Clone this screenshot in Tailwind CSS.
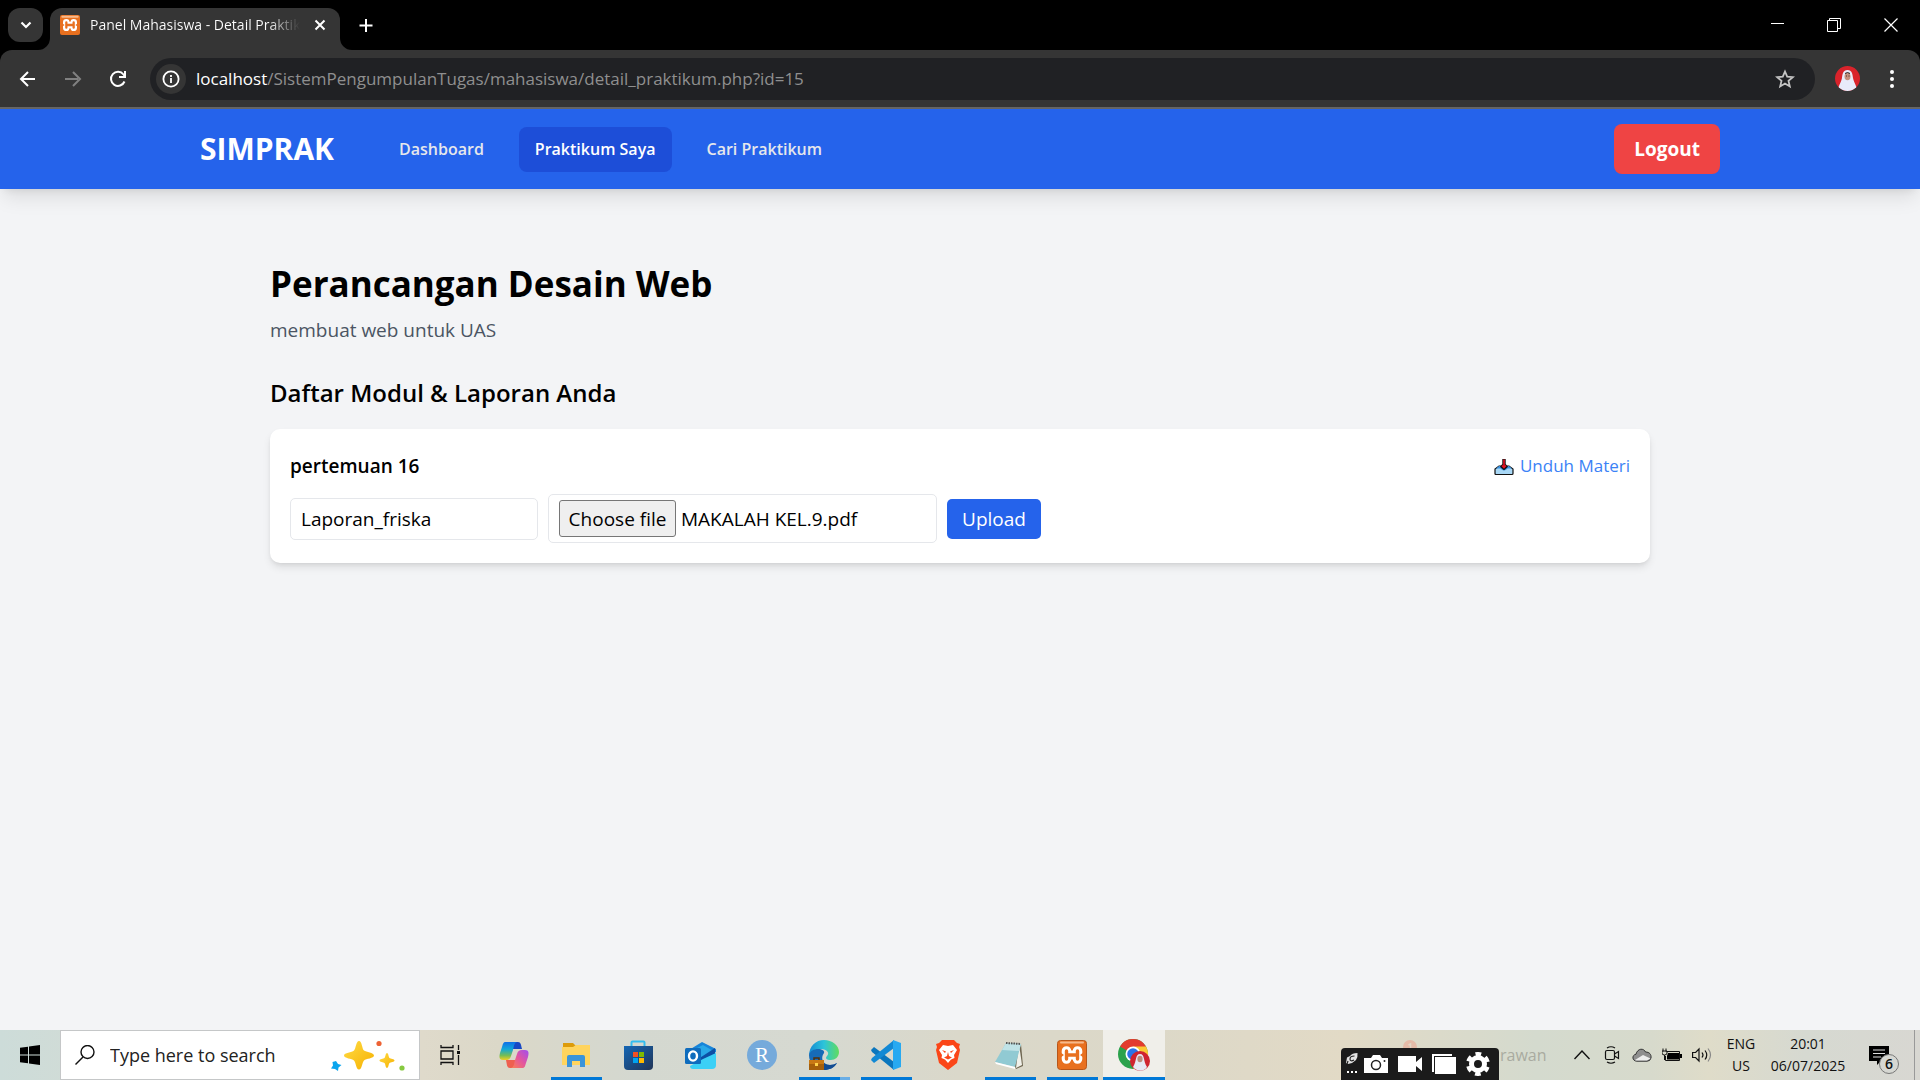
<!DOCTYPE html>
<html lang="id">
<head>
<meta charset="utf-8">
<meta name="viewport" content="width=device-width, initial-scale=1">
<title>Panel Mahasiswa - Detail Praktikum</title>
<script src="https://cdn.jsdelivr.net/npm/@tailwindcss/browser@4"></script>
</head>
<body class="flex min-h-screen flex-col bg-[#f3f4f6] font-['Open_Sans','Noto_Sans',sans-serif] text-black">

<!-- Tab strip -->
<div class="flex h-[50px] shrink-0 items-start bg-black text-white">
  <button aria-label="Search tabs" class="mt-2 ml-2 flex h-[34px] w-[35px] items-center justify-center rounded-xl bg-[#353535]">
    <svg class="size-4" viewBox="0 0 16 16" fill="none" stroke="currentColor" stroke-width="2.2"><path d="M3.500 5.500L8 10l4.500-4.500"/></svg>
  </button>
  <div class="relative mt-2 ml-[7px] flex h-[42px] w-[290px] items-center rounded-t-xl bg-[#353535] pb-2 pl-[10px]">
    <svg class="absolute -left-3 bottom-0 size-3" viewBox="0 0 12 12"><path d="M12 0v12H0A12 12 0 0 0 12 0z" fill="#353535"/></svg>
    <svg class="absolute -right-3 bottom-0 size-3" viewBox="0 0 12 12"><path d="M0 0v12h12A12 12 0 0 1 0 0z" fill="#353535"/></svg>
    <svg class="size-5 shrink-0" viewBox="0 0 30 30"><rect width="30" height="30" rx="3" fill="#e8701f"/><rect x="2" y="1" width="26" height="3" rx="1.500" fill="#f6b98c"/><path d="M9.500 11v8M20.500 11v8M9.500 15h11" fill="none" stroke="#fff" stroke-width="10" stroke-linecap="round"/><path d="M9.500 11v8M20.500 11v8M9.500 15h11" fill="none" stroke="#e8701f" stroke-width="3.400" stroke-linecap="round"/><path d="M3 12.500L7 15l-4 2.500zM27 12.500L23 15l4 2.500zM12.500 5h5L15 10zM12.500 25h5L15 20z" fill="#e8701f"/></svg>
    <span class="ml-[10px] w-[210px] overflow-hidden bg-linear-to-r from-white from-85% to-[#353535] bg-clip-text text-[14px] leading-5 whitespace-nowrap text-transparent">Panel Mahasiswa - Detail Praktikum</span>
    <button aria-label="Close tab" class="ml-3 shrink-0"><svg class="size-4" viewBox="0 0 16 16" stroke="currentColor" stroke-width="2"><path d="M3.500 3.500l9 9M12.500 3.500l-9 9"/></svg></button>
  </div>
  <button aria-label="New tab" class="mt-[17px] ml-[18px]"><svg class="size-4" viewBox="0 0 16 16" stroke="currentColor" stroke-width="2"><path d="M8 2v13M1.500 8.500h13"/></svg></button>
  <div class="ml-auto flex h-[50px]">
    <button aria-label="Minimize" class="flex w-14 items-center justify-center"><svg class="size-[14px]" viewBox="0 0 14 14" stroke="currentColor"><path d="M0 5.500h13"/></svg></button>
    <button aria-label="Restore" class="flex w-14 items-center justify-center"><svg class="size-[14px]" viewBox="0 0 14 14" fill="none" stroke="currentColor"><path d="M.5 2.500h10v11h-10zM2.500 2.500v-2h11v10h-3"/></svg></button>
    <button aria-label="Close" class="flex w-[58px] items-center justify-center"><svg class="size-[14px]" viewBox="0 0 14 14" stroke="currentColor" stroke-width="1.200"><path d="M.5.5l13 13M13.500.5l-13 13"/></svg></button>
  </div>
</div>

<!-- Address bar -->
<div class="bg-black">
<div class="flex h-[59px] shrink-0 items-center rounded-t-xl border-b-2 border-[#666] bg-[#353535] pl-[18px] text-white">
  <button aria-label="Back" class="mr-[25px]"><svg class="size-5" viewBox="0 0 20 20" fill="none" stroke="currentColor" stroke-width="2"><path d="M17 10H4M10 3l-7 7 7 7"/></svg></button>
  <button aria-label="Forward" class="mr-[25px] text-[#808080]"><svg class="size-5" viewBox="0 0 20 20" fill="none" stroke="currentColor" stroke-width="2"><path d="M2 10h13M10 3l7 7-7 7"/></svg></button>
  <button aria-label="Reload" class="mr-[22px]"><svg class="size-5" viewBox="0 0 20 20" fill="none" stroke="currentColor" stroke-width="2"><path d="M16.500 12.500A7 7 0 1 1 15.500 5.500L17 7.500"/><path d="M17 2v6h-6" /></svg></button>
  <div class="flex h-[42px] flex-1 items-center rounded-full bg-[#202124] pr-5 pl-[6px]">
    <button aria-label="Site information" class="flex size-[30px] shrink-0 items-center justify-center rounded-full bg-[#353535]"><svg class="size-[18px]" viewBox="0 0 18 18" fill="none" stroke="currentColor" stroke-width="1.800"><circle cx="9" cy="9" r="7.600"/><path d="M9 8v5M9 5v2"/></svg></button>
    <div class="ml-[10px] text-[17px] leading-6 whitespace-nowrap text-[#8f8f8f]"><span class="text-white">localhost</span>/SistemPengumpulanTugas/mahasiswa/detail_praktikum.php?id=15</div>
    <button aria-label="Bookmark" class="ml-auto text-[#c4c4c4]"><svg class="size-5" viewBox="0 0 20 20" fill="none" stroke="currentColor" stroke-width="1.800"><path d="M10 2.500l2.200 5.200 5.600.5-4.300 3.700 1.300 5.500-4.800-2.900-4.800 2.900 1.300-5.500L2.200 8.200l5.600-.5z"/></svg></button>
  </div>
  <button aria-label="Profile" class="ml-5"><svg class="size-[25px] rounded-full" viewBox="0 0 25 25"><rect width="25" height="25" fill="#d9232b"/><path d="M12.500 4C8 4 7.500 8 7 12 6 17 3 20 3 25h19c0-5-3-8-4-13-.5-4-1-8-5.500-8z" fill="#e8ebfa"/><ellipse cx="12.500" cy="10.500" rx="3" ry="3.800" fill="#c58f7c"/><path d="M10 7.500q2.500-2 5 0" stroke="#222" fill="none"/><path d="M11 10h1M13.500 10h1" stroke="#46302c"/></svg></button>
  <button aria-label="Menu" class="mr-[18px] ml-[22px]"><svg class="size-5" viewBox="0 0 20 20" fill="currentColor"><circle cx="10" cy="3" r="2"/><circle cx="10" cy="10" r="2"/><circle cx="10" cy="17" r="2"/></svg></button>
</div>
</div>

<!-- Site navigation -->
<nav class="bg-[#2563eb] shadow-[0_12px_19px_-4px_rgb(0_0_0/0.1),0_5px_8px_-5px_rgb(0_0_0/0.1)]">
  <div class="mx-auto flex h-20 max-w-[1600px] items-center px-10">
    <a href="#" class="w-[134px] text-[30px] leading-10 font-bold whitespace-nowrap text-white">SIMPRAK</a>
    <div class="ml-[50px] flex gap-5 text-[16px] leading-[25px] font-semibold whitespace-nowrap text-gray-200">
      <a href="#" class="rounded-lg px-[15px] py-[10px]">Dashboard</a>
      <a href="#" class="rounded-lg bg-[#1d4ed8] px-4 py-[10px] text-white">Praktikum Saya</a>
      <a href="#" class="rounded-lg px-[15px] py-[10px]">Cari Praktikum</a>
    </div>
    <button class="ml-auto rounded-lg bg-[#ef4444] px-5 py-[10px] text-[19px] leading-[30px] font-bold text-white">Logout</button>
  </div>
</nav>

<main class="mx-auto w-full max-w-[1380px] flex-1 pt-[70px]">
  <h1 class="text-[35px] leading-[50px] font-bold">Perancangan Desain Web</h1>
  <p class="mt-[6px] text-[19px] leading-[30px] text-[#4b5563]">membuat web untuk UAS</p>
  <h2 class="mt-[30px] text-[24px] leading-[35px] font-semibold">Daftar Modul &amp; Laporan Anda</h2>
  <section class="mt-[19px] rounded-[10px] bg-white p-5 shadow-[0_5px_8px_-1px_rgb(0_0_0/0.1),0_2px_5px_-2px_rgb(0_0_0/0.1)]">
    <div class="flex h-[34px] items-center justify-between">
      <h3 class="text-[19px] leading-[30px] font-semibold">pertemuan 16</h3>
      <a href="#" class="flex items-center gap-1.5 text-[17px] leading-[30px] text-[#3b82f6]">
        <svg class="size-5" viewBox="0 0 20 20"><path d="M5 10h10l4 3v4.500q0 1-1 1H2q-1 0-1-1V13z" fill="#a9d8f6" stroke="#111" stroke-width="1.200"/><path d="M5 10h10l3 2.500h-4.500q-3.500 4-7 0H2z" fill="#3a91e0"/><path d="M10 3v8M7 9.500l3 2.500 3-2.500" stroke="#111" stroke-width="3.400" fill="none"/><path d="M10 3.500v7M8 9.500l2 2 2-2" stroke="#e81224" stroke-width="1.600" fill="none"/></svg>
        Unduh Materi</a>
    </div>
    <form class="mt-[11px] flex items-center gap-[10px] text-[19px] leading-[30px]">
      <input type="text" aria-label="Nama laporan" value="Laporan_friska" class="h-[42px] w-[248px] rounded-[5px] border border-[#e5e7eb] px-[10px]">
      <div class="flex h-[49px] w-[389px] items-center gap-[5px] rounded-[5px] border border-[#e5e7eb] px-[10px]">
        <input type="file" id="berkas" class="sr-only">
        <label for="berkas" class="flex h-[37px] w-[117px] items-center justify-center rounded-[3px] border border-[#767676] bg-[#efefef] whitespace-nowrap">Choose file</label>
        <span class="whitespace-nowrap">MAKALAH KEL.9.pdf</span>
      </div>
      <button type="button" class="h-10 w-[94px] rounded-[5px] bg-[#2563eb] text-white">Upload</button>
    </form>
  </section>
</main>

<!-- Windows taskbar -->
<footer class="relative flex h-[50px] shrink-0 items-stretch bg-[linear-gradient(90deg,#cddcd9_0%,#dfdacb_22%,#dbd8c8_26%,#d4d8d0_33%,#d6d9d1_42%,#dad8ca_50%,#dcd8c8_60%,#e2dac6_70%,#d4dace_80%,#d7dacc_86%,#dfdcc9_89%,#d6d9d1_94%,#d8d7d2_100%)]">
  <button aria-label="Start" class="flex w-[60px] items-center justify-center"><svg class="size-5" viewBox="0 0 20 20"><path d="M0 2.800L8 1.700v7.700H0zM9 1.500L20 0v9.400H9zM0 10.400h8v7.900l-8-1.100zM9 10.400h11V20L9 18.500z"/></svg></button>
  <label class="flex w-[360px] items-center border border-[#c5c7c8] bg-white pl-[14px]">
    <svg class="size-5 shrink-0" viewBox="0 0 20 20" fill="none" stroke="#111" stroke-width="1.400"><circle cx="12.500" cy="7" r="6.500"/><path d="M8 12L.5 19.500"/></svg>
    <input type="text" aria-label="Search" value="Type here to search" class="ml-[15px] w-[210px] text-[18px] leading-6 text-[#222]">
    <svg class="ml-2 h-8 w-20 shrink-0" viewBox="0 0 80 32"><defs><linearGradient id="star" x2="1" y2="1"><stop stop-color="#ffdc45"/><stop offset="1" stop-color="#f6b000"/></linearGradient></defs><path d="M31 2c3 0 3 8 5 9.500s10 2 10 5-8 3-10 5-2 9-5 9-3-7-5-9-10-2-10-5 8-3 10-5 2-9.500 5-9.500z" fill="url(#star)"/><path d="M59 14c1.500 0 1.500 4 2.500 5s5 1 5 2.500-4 1.500-5 2.500-1 5-2.500 5-1.500-4-2.500-5-5-1-5-2.500 4-1.500 5-2.500 1-5 2.500-5z" fill="url(#star)"/><path d="M8 22l2 3 3.500 1-3 2.500-.5 3.500-3-2-4-.5 2-3-.5-3.500z" fill="#0aa5ee"/><circle cx="51" cy="4.500" r="2.600" fill="#ed6234"/><circle cx="74" cy="29" r="2.600" fill="#86c940"/></svg>
  </label>
  <button aria-label="Task view" class="mr-[3px] flex w-[60px] items-center justify-center"><svg class="size-5" viewBox="0 0 20 20" fill="none" stroke="#111" stroke-width="1.300"><path d="M1 0v2.500h12V0M1 6h12v8H1zM1 20v-2.500h12V20M18.500 0v5M18.500 10v10"/><path d="M17 6h3v3h-3z" fill="#111" stroke="none"/></svg></button>

  <button aria-label="Copilot" class="relative flex w-[62px] items-center justify-center"><svg class="h-7 w-[30px]" viewBox="0 0 30 28"><defs><linearGradient id="cpA" x2="0" y2="1"><stop stop-color="#0f6fe8"/><stop offset=".4" stop-color="#12a8d8"/><stop offset=".75" stop-color="#76bd55"/><stop offset="1" stop-color="#f0cf22"/></linearGradient><linearGradient id="cpB" x1="1" x2="0" y2="1"><stop stop-color="#a04df0"/><stop offset=".5" stop-color="#e3559f"/><stop offset="1" stop-color="#fb8250"/></linearGradient></defs><path d="M14 1h5c3 0 3 3 4 7h-9z" fill="#1948c4"/><path d="M7 1h11c-3 1-3 4-4 8l-2 6c-1 3-2 4-5 4H4c-4 0-4-3-3-7l2-6c1-3 1-5 4-5z" fill="url(#cpA)"/><path d="M16 27h-5c-3 0-3-3-4-8h9z" fill="#ee6050"/><path d="M23 27H12c3-1 3-4 4-8l2-6c1-3 2-4 5-4h3c4 0 4 3 3 7l-2 6c-1 3-1 5-4 5z" fill="url(#cpB)"/></svg></button>
  <button aria-label="File Explorer" class="relative flex w-[62px] items-center justify-center after:absolute after:bottom-0 after:h-[3px] after:w-[51px] after:bg-[#0078d7]"><svg class="h-6 w-7" viewBox="0 0 28 24"><path d="M1 0h10l3 3-3 4H1z" fill="#dd9b0a"/><path d="M0 4h11l3-2h14v20H0z" fill="#ffd45e"/><path d="M5 24V14q0-2 2-2h14q2 0 2 2v10h-5v-6h-8v6z" fill="#3b94d9"/></svg></button>
  <button aria-label="Microsoft Store" class="relative flex w-[62px] items-center justify-center"><svg class="size-[30px]" viewBox="0 0 30 30"><defs><linearGradient id="store" x2="1" y2="1"><stop stop-color="#1366b5"/><stop offset="1" stop-color="#213456"/></linearGradient></defs><path d="M8.500 7V2.500q0-1 1-1h11q1 0 1 1V7" fill="none" stroke="#32bdf0" stroke-width="2"/><path d="M1 6h29v20q0 4-4 4H5q-4 0-4-4z" fill="url(#store)"/><path d="M10 12h5v5h-5z" fill="#f25022"/><path d="M16 12h5v5h-5z" fill="#7fba00"/><path d="M10 18h5v5h-5z" fill="#00a4ef"/><path d="M16 18h5v5h-5z" fill="#ffb900"/></svg></button>
  <button aria-label="Outlook" class="relative flex w-[62px] items-center justify-center"><svg class="h-[27px] w-[31px]" viewBox="0 0 31 27"><path d="M4 8L17 0l14 7v3L18 17 4 14z" fill="#1784d9"/><path d="M8 8l10-5 12 7-14 7z" fill="#29a8e8"/><path d="M30 6v11L14 25l-4-6z" fill="#0d4fa5"/><path d="M31 11v12q0 4-4 4H8q-3 0-3-3l13-7z" fill="#3bd0f6"/><rect y="6" width="16" height="16" rx="1.500" fill="#0f6cbd"/><ellipse cx="8" cy="14" rx="4" ry="4.600" fill="none" stroke="#fff" stroke-width="2.400"/></svg></button>
  <button aria-label="RStudio" class="relative flex w-[62px] items-center justify-center"><span class="flex size-[30px] items-center justify-center rounded-full bg-[#75aadb] font-['Liberation_Serif',serif] text-[21px] leading-6 text-white">R</span></button>
  <button aria-label="Edge" class="relative flex w-[62px] items-center justify-center after:absolute after:bottom-0 after:h-[3px] after:w-[51px] after:bg-linear-to-r after:from-[#0078d7] after:from-80% after:to-[#6aaee6] after:to-80%"><svg class="size-[30px]" viewBox="0 0 30 30"><defs><linearGradient id="edge" x2="1"><stop stop-color="#168bd2"/><stop offset=".5" stop-color="#2cc4da"/><stop offset="1" stop-color="#62dc5e"/></linearGradient></defs><path d="M0 16C0 6 7 0 15 0s15 5 15 12c0 5-4 8-8 8-5 0-6-2-4-4 3-3 0-7-6-7C5 9 1 13 0 16z" fill="url(#edge)"/><path d="M0 15c1-4 5-6 9-6s7 2 6 4c-4 5-1 12 6 12 3 0 5-1 7-2-3 5-8 7-13 7C6 30 0 23 0 15z" fill="#176bb7"/><path d="M12 18c0 4 4 7 9 7 3 0 5-1 7-2-3 5-8 7-13 7z" fill="#124b91"/><rect y="20" width="15" height="10" fill="#a55f0b"/><path d="M5 20v-2h5v2" fill="none" stroke="#563008" stroke-width="1.500"/><path d="M0 20h15v4H0z" fill="#c87814"/><rect x="6" y="23" width="3" height="3" fill="#ffd24a"/></svg></button>
  <button aria-label="Visual Studio Code" class="relative flex w-[62px] items-center justify-center after:absolute after:bottom-0 after:h-[3px] after:w-[51px] after:bg-[#0078d7]"><svg class="size-[30px]" viewBox="0 0 30 30"><path d="M0 10l3-3L23 22v8L1 12z" fill="#0b76bd"/><path d="M0 20l3 3L23 8V0L1 18z" fill="#1289d4"/><path d="M22 0l8 3v24l-8 3z" fill="#27a9f1"/></svg></button>
  <button aria-label="Brave" class="relative flex w-[62px] items-center justify-center"><svg class="h-[30px] w-[26px]" viewBox="0 0 26 30"><path d="M7 0h12l3 3 3 1-1 3 1 3-3 13-9 7-9-7L1 10l1-3-1-3 3-1z" fill="#fb4618"/><path d="M8 5l5 1 5-1 4 5-3 5 .5 3-3.500 1.500L13 23l-3-3.500L6.500 18l.5-3-3-5z" fill="#fff"/><path d="M7 10l4 1.500-1 1.500zM19 10l-4 1.500 1 1.500zM13 12l-1 4-3 1.500 4 2 4-2-3-1.500z" fill="#fb4618"/></svg></button>
  <button aria-label="Notepad" class="relative flex w-[62px] items-center justify-center after:absolute after:bottom-0 after:h-[3px] after:w-[51px] after:bg-[#0078d7]"><svg class="h-7 w-[30px]" viewBox="0 0 30 28"><path d="M11 2l15 1 2 22-7 3z" fill="#6f6752"/><path d="M24 3l3 21-6 3z" fill="#f1f1ea"/><path d="M11 2l15 1-6 23L0 21z" fill="#91cad3"/><path d="M11 2l15 1-2 7L7 9z" fill="#c0e3e7"/><path d="M0 21l20 5v2L1 23z" fill="#fff"/><path d="M11 2l15 1" stroke="#555" stroke-width="2" stroke-dasharray="1.500 1"/></svg></button>
  <button aria-label="XAMPP" class="relative flex w-[62px] items-center justify-center after:absolute after:bottom-0 after:h-[3px] after:w-[51px] after:bg-[#0078d7]"><svg class="size-[30px]" viewBox="0 0 30 30"><rect x=".5" y=".5" width="29" height="29" rx="3" fill="#e8701f" stroke="#b7561a"/><rect x="3" y="1.500" width="24" height="2" rx="1" fill="#f6b98c"/><path d="M9.500 11v8M20.500 11v8M9.500 15h11" fill="none" stroke="#fff" stroke-width="9.600" stroke-linecap="round"/><path d="M9.500 11v8M20.500 11v8M9.500 15h11" fill="none" stroke="#e8701f" stroke-width="3.400" stroke-linecap="round"/><path d="M3.500 12.500L7 15l-3.500 2.500zM26.500 12.500L23 15l3.500 2.500zM12.500 5.500h5L15 11zM12.500 24.500h5L15 19z" fill="#e8701f"/></svg></button>
  <button aria-label="Chrome" class="relative flex w-[62px] items-center justify-center bg-[#f0efea] after:absolute after:bottom-0 after:h-[3px] after:w-full after:bg-[#0078d7]"><svg class="size-8" viewBox="0 0 32 32"><circle cx="15" cy="15" r="15" fill="#2ba24c"/><path d="M15 15L2 7.500A15 15 0 0 1 28 7.500z" fill="#e33b2e"/><path d="M15 7.500h13A15 15 0 0 1 15 30l6.500-11z" fill="#fcc934"/><circle cx="15" cy="15" r="7.500" fill="#fff"/><circle cx="15" cy="15" r="5.800" fill="#2b73e8"/><circle cx="22" cy="22" r="10" fill="#cf2430"/><path d="M22 15c-5 0-3 7-7 13 4 5 11 5 14 0-4-6-2-13-7-13z" fill="#e6e8f4"/><ellipse cx="22" cy="20" rx="2.600" ry="3.300" fill="#be8d7b"/></svg></button>

  <div class="ml-auto flex items-center text-[14px] leading-[22px] text-[#111]">
    <span class="w-[67px] text-[16px] text-[#a9aba0]">rawan</span>
    <button aria-label="Show hidden icons" class="flex w-[30px] justify-center"><svg class="h-[10px] w-4" viewBox="0 0 16 10" fill="none" stroke="#111" stroke-width="1.400"><path d="M.5 9L8 1l7.500 8"/></svg></button>
    <button aria-label="Meet now" class="flex w-[30px] justify-center"><svg class="size-[18px]" viewBox="0 0 18 18" fill="none" stroke="#111" stroke-width="1.200"><rect x="2.500" y="4.500" width="9" height="9" rx="1.500"/><path d="M11.500 8l4-2.500v7l-4-2.500M4 2q4-2.500 8 0M4 16q4 2.500 8 0"/></svg></button>
    <button aria-label="OneDrive" class="flex w-[30px] justify-center"><svg class="h-[14px] w-5" viewBox="0 0 20 14"><path d="M5 13.200c-5 0-5.500-6.200-1-7C5.500 0 12 0 13.500 4c4 0 6 2.500 5.500 6q-.8 3.200-4 3.200z" fill="#8f8f8f" stroke="#333"/><path d="M3 12l8-5 7.500 3.500L15 12.600H4z" fill="#eee"/></svg></button>
    <button aria-label="Battery" class="flex w-[30px] justify-center"><svg class="h-[14px] w-5" viewBox="0 0 20 14"><path d="M4.500 3.500h13v9H3.500V8" fill="none" stroke="#111"/><path d="M6 5h11v6.500H5V8z"/><path d="M18 6h2v4h-2z"/><path d="M1 .5v3M4 .5v3M0 3h5v2q0 2-2.500 2T0 5zM2.500 7v5" fill="none" stroke="#111"/></svg></button>
    <button aria-label="Volume" class="flex w-[30px] justify-center"><svg class="h-4 w-5" viewBox="0 0 20 16" fill="none" stroke="#111" stroke-width="1.200"><path d="M.6 5.500h3L7 2v12l-3.400-3.500h-3zM10 5.500q2 2.500 0 5M13 3.500q3.500 4.500 0 9"/><path d="M16 1.500q5 6.500 0 13" stroke="#888"/></svg></button>
    <div class="w-[48px] text-center">ENG<br>US</div>
    <div class="w-[86px] text-center whitespace-nowrap">20:01<br>06/07/2025</div>
    <button aria-label="Notifications" class="relative flex h-[50px] w-[63px] items-start pt-[15px] pl-[18px]">
      <svg class="size-5" viewBox="0 0 20 20"><path d="M0 1h20v15h-8l-4 4v-4H0z"/><path d="M4 5h12M4 8.500h12M4 12h8" stroke="#ddd" stroke-width="1.200"/></svg>
      <span class="absolute top-6 left-7 flex size-5 items-center justify-center rounded-full border border-[#777] bg-[#d6d7d2] text-[14px] leading-5 font-semibold">6</span>
    </button>
    <div class="h-[50px] w-[6px] border-l border-[#999]"></div>
  </div>

  <!-- Floating capture toolbar -->
  <svg class="absolute right-[503px] bottom-[26px] size-[14px]" viewBox="0 0 14 14"><circle cx="7" cy="7" r="7" fill="#e5bba8"/><path d="M5.500 5l2-1v7" fill="none" stroke="#e3d7c5" stroke-width="1.500"/></svg>
  <div class="absolute right-[421px] bottom-0 flex h-8 w-[158px] items-center gap-[10px] rounded-t-[4px] bg-[#1b1b1b] pl-[5px] text-white">
    <svg class="-mr-1 h-[22px] w-3 shrink-0" viewBox="0 0 12 22"><path d="M11.500 0Q6 0 4 3L1 4.500 0 10l2 1 4-1 4-3q2-3 1.500-7z" fill="#e4e4e4"/><path d="M8.500 3Q4 3 4 6t4 1M2 8l-1 3" fill="none" stroke="#222" stroke-width="1.200"/><path d="M1 18h2v2H1zM5 18h2v2H5zM9 18h2v2H9z" fill="#fff"/></svg>
    <button aria-label="Screenshot"><svg class="h-5 w-6" viewBox="0 0 24 20"><path d="M0 4h7l2-3h7l2 3h6v15H0z" fill="#fff"/><circle cx="12" cy="11" r="4.500" fill="none" stroke="#222" stroke-width="1.500"/><circle cx="20.500" cy="7" r="1" fill="#222"/></svg></button>
    <button aria-label="Record video"><svg class="h-5 w-6" viewBox="0 0 24 20"><path d="M0 2h18v6l6-5v14l-6-5v6H0z" fill="#fff"/></svg></button>
    <button aria-label="Gallery"><svg class="h-5 w-6" viewBox="0 0 24 20"><path d="M0 0h20v2H2v16H0z" fill="#fff"/><path d="M3 3h21v17H3z" fill="#fff"/></svg></button>
    <button aria-label="Settings"><svg class="size-6" viewBox="0 0 24 24" fill="none"><circle cx="12" cy="12" r="6.500" stroke="#fff" stroke-width="5"/><circle cx="12" cy="12" r="10" stroke="#fff" stroke-width="4" stroke-dasharray="5.500 4.970" stroke-dashoffset="2.700" transform="rotate(30 12 12)"/></svg></button>
  </div>
</footer>
</body>
</html>
